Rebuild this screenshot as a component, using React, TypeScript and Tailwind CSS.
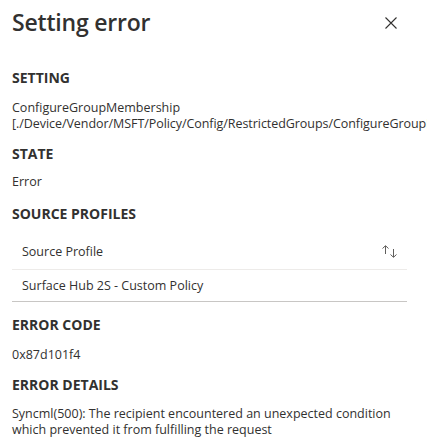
import React from 'react';

const Section: React.FC<{ title: string; className?: string; children: React.ReactNode }> = ({
    title,
    className = '',
    children,
}) => (
    <div className={className}>
        <h2 className="text-[14px] leading-[20px] font-bold">{title}</h2>
        {children}
    </div>
);

const App: React.FC = () => {
    return (
        <div
            className="w-[427px] h-[439px] overflow-hidden bg-white text-[#323130]"
            style={{ fontFamily: '"Open Sans", "Noto Sans", sans-serif' }}
        >
            <div className="flex items-start justify-between pl-3 pr-[30px] pt-[6px]">
                <h1 className="text-[23px] leading-[32px] font-semibold tracking-[-0.2px]">Setting error</h1>
                <button className="mt-[11px] w-[12px] h-[12px] flex items-center justify-center">
                    <svg width="12" height="12" viewBox="0 0 12 12" fill="none">
                        <path d="M0.5 0.5L11.5 11.5M11.5 0.5L0.5 11.5" stroke="#323130" strokeWidth="1.1" />
                    </svg>
                </button>
            </div>

            <div className="pl-3 pr-5 text-[12.5px] leading-[16px]">
                <Section title="SETTING" className="mt-[30px]">
                    <p className="mt-[12px] whitespace-nowrap">
                        ConfigureGroupMembership
                        <br />
                        <span className="tracking-[-0.06px]">
                            [./Device/Vendor/MSFT/Policy/Config/RestrictedGroups/ConfigureGroupMembership]
                        </span>
                    </p>
                </Section>

                <Section title="STATE" className="mt-[12px]">
                    <p className="mt-[10px]">Error</p>
                </Section>

                <Section title="SOURCE PROFILES" className="mt-[14px]">
                    <div className="mt-[10px]">
                        <div className="h-[36px] flex items-center justify-between pl-[10px] pr-[9px] border-b border-[#edebe9] font-medium">
                            <span>Source Profile</span>
                            <svg width="16" height="13" viewBox="0 0 16 13" fill="none" stroke="#605e5c" strokeWidth="1">
                                <path d="M3.5 1V9M0.5 3.5L3.5 0.7L6.5 3.5" />
                                <path d="M11.5 4V12M8.5 9.5L11.5 12.3L14.5 9.5" />
                            </svg>
                        </div>
                        <div className="h-[32px] flex items-center pl-[10px] border-b border-[#c8c6c4]">
                            Surface Hub 2S - Custom Policy
                        </div>
                    </div>
                </Section>

                <Section title="ERROR CODE" className="mt-[13px]">
                    <p className="mt-[12px]">0x87d101f4</p>
                </Section>

                <Section title="ERROR DETAILS" className="mt-[12px]">
                    <p className="mt-[11px]">
                        Syncml(500): The recipient encountered an unexpected condition which prevented it from fulfilling the request
                    </p>
                </Section>
            </div>
        </div>
    );
};

export default App;
